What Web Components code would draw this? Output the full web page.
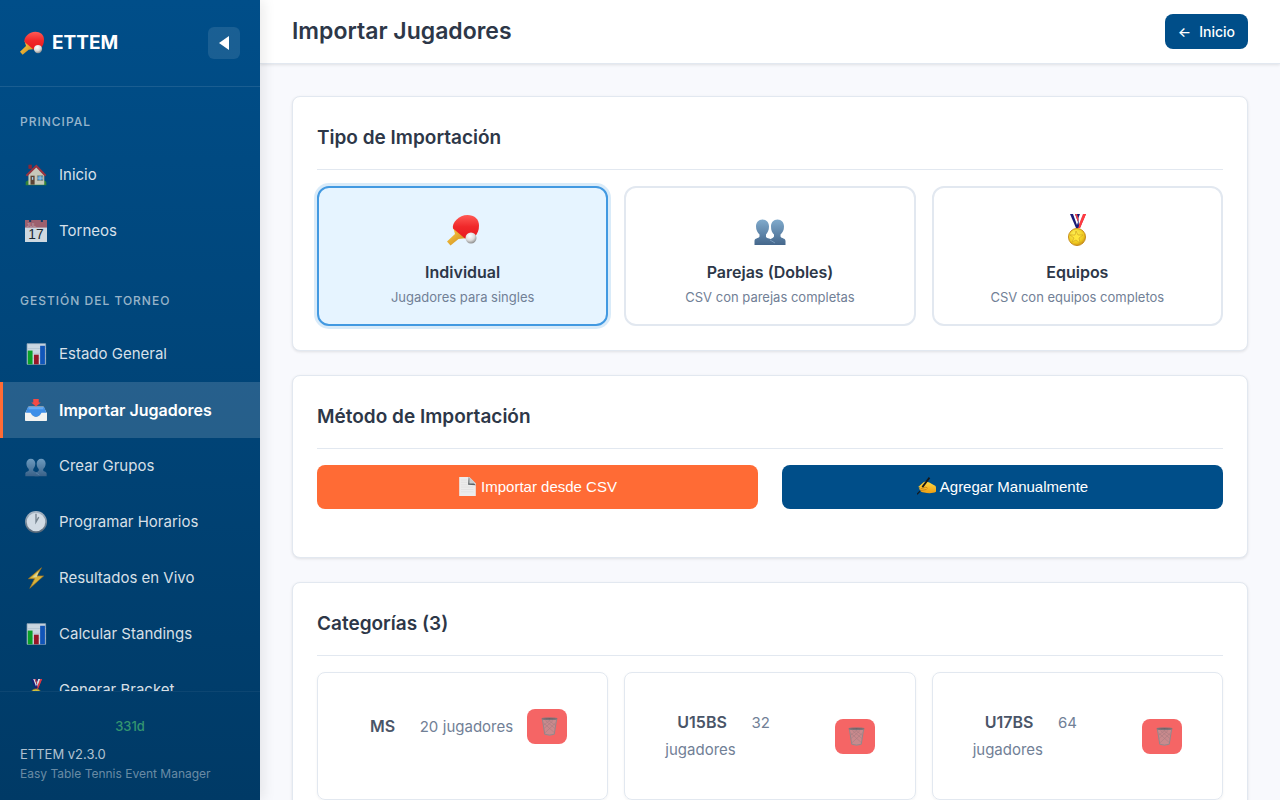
<!DOCTYPE html>
<html lang="es">
<head>
<meta charset="utf-8">
<meta name="viewport" content="width=device-width, initial-scale=1">
<title>Importar Jugadores - ETTEM</title>
<style>
	:root {
		--primary: #004e89;
		--accent: #ff6b35;
		--danger: #f56565;
		--text: #2d3748;
		--text-soft: #4a5568;
		--muted: #718096;
		--line: #e2e8f0;
	}

	body {
		margin: 0;
		background: #f8f9fd;
		color: var(--text);
		font: 16px/26px Inter, "Liberation Sans", sans-serif;
	}
</style>
</head>
<body>
<app-shell>
	<side-bar slot="sidebar">
		<nav-section label="Principal">
			<nav-item icon="house">Inicio</nav-item>
			<nav-item icon="calendar">Torneos</nav-item>
		</nav-section>
		<nav-section label="Gestión del Torneo">
			<nav-item icon="chart">Estado General</nav-item>
			<nav-item icon="inbox" active>Importar Jugadores</nav-item>
			<nav-item icon="people">Crear Grupos</nav-item>
			<nav-item icon="clock">Programar Horarios</nav-item>
			<nav-item icon="bolt">Resultados en Vivo</nav-item>
			<nav-item icon="chart">Calcular Standings</nav-item>
			<nav-item icon="medal">Generar Bracket</nav-item>
		</nav-section>
	</side-bar>
	<page-header slot="header">Importar Jugadores</page-header>
	<content-card heading="Tipo de Importación">
		<type-picker></type-picker>
	</content-card>
	<content-card heading="Método de Importación">
		<method-row>
			<method-button icon="page" variant="accent">Importar desde CSV</method-button>
			<method-button icon="writing">Agregar Manualmente</method-button>
		</method-row>
	</content-card>
	<content-card heading="Categorías (3)">
		<category-grid>
			<category-card name="MS" players="20"></category-card>
			<category-card name="U15BS" players="32"></category-card>
			<category-card name="U17BS" players="64"></category-card>
		</category-grid>
	</content-card>
</app-shell>

<script>
const ICONS = {
	paddle: `
		<defs>
			<linearGradient id="r" x1="0" y1="0" x2="0" y2="1"><stop offset="0" stop-color="#ff5a55"/><stop offset=".5" stop-color="#f0282a"/><stop offset="1" stop-color="#e8191d"/></linearGradient>
			<linearGradient id="w" x1="0" y1="0" x2="1" y2="1"><stop offset="0" stop-color="#ffd04a"/><stop offset="1" stop-color="#c98518"/></linearGradient>
			<radialGradient id="b" cx=".4" cy=".3" r=".7"><stop offset="0" stop-color="#fff"/><stop offset=".6" stop-color="#dcdcdc"/><stop offset="1" stop-color="#8f8f8f"/></radialGradient>
		</defs>
		<path fill="url(#w)" d="M6 13 8 20 0 27.500 3.500 31.500 11.500 25 20 24Z"/>
		<path fill="url(#r)" d="M6 14.500C4.500 9 12 1 20.500 1 27 1 32 5 32 11.500c0 5-1.500 8-4.500 11.500L18 24.500Z"/>
		<circle fill="url(#b)" cx="24" cy="24" r="5.500"/>`,
	house: `
		<path fill="#3b8d2b" d="M1 26q4-4 8 0h14q4-4 8 0v5H1Z"/>
		<path fill="#eadfc4" d="M5 15 16 4l12 11v15H5Z"/>
		<path fill="#a3222a" d="M5 1h5v6H5Z"/>
		<path fill="none" stroke="#b52f35" stroke-width="3" d="M2 17 16.500 3 30 17"/>
		<path fill="#6d4227" d="M8 17h6v13H8z"/>
		<path fill="#bde4ff" d="M10 19h2v4h-2z"/>
		<path fill="#4f9fd8" stroke="#9c8a68" d="M18 17h8v7h-8z"/>
		<path stroke="#d7ecf7" d="M22 17v7M18 20.500h8"/>`,
	calendar: `
		<path fill="#f2f2f2" d="M0 0h32v32H0z"/>
		<path fill="#b8656c" d="M0 0h32v11H0z"/>
		<path fill="#143b63" d="M6 0h3v3H6zM23 0h3v3h-3z"/>
		<text x="2" y="10" font-size="8" fill="#e0b0b4" font-family="Liberation Sans">JUL</text>
		<text x="16" y="28" font-size="20" text-anchor="middle" fill="#222" font-family="Liberation Sans">17</text>`,
	chart: `
		<path fill="#edf1f5" stroke="#b8c2cc" d="M3 1h27v30H3z"/>
		<path stroke="#cfd6de" d="M3 8h27M3 15h27M3 22h27"/>
		<path fill="#0db21c" d="M4 11h7v20H4z"/>
		<path fill="#b3101b" d="M13 17h7v14h-7z"/>
		<path fill="#1459c4" d="M22 4h7v27h-7z"/>`,
	inbox: `
		<path fill="#d8d8d8" d="M5 11h22l5 10H0Z"/>
		<path fill="#3f8fe8" d="M4 12h24l3 8-8 3q-7 6-14 0l-8-3Z"/>
		<path fill="#64acf5" d="M6 12h20l1 3H5Z"/>
		<path fill="#f3f3f1" d="M0 20h8q3 6 8 6t8-6h8v11q0 1-1 1H1q-1 0-1-1Z"/>
		<path fill="#f44a43" d="M12 0h8v5h3l-7 6-7-6h3Z"/>`,
	people: `
		<defs><linearGradient id="p" gradientUnits="userSpaceOnUse" x1="0" y1="5" x2="0" y2="31"><stop offset="0" stop-color="#7fa9cb"/><stop offset="1" stop-color="#426489"/></linearGradient></defs>
		<g fill="url(#p)" transform="translate(0 1)">
			<path d="M8.500 4.500c4 0 6.500 3 6.500 7 0 4-1.500 6-3 8v2.500c2 2 7 2 8 4v4H.5v-4c0-3 4-2.500 5-4.500v-2C3.500 17.500 2 15 2 11.500c0-4 2.500-7 6.500-7Z"/>
			<path d="M23.500 4.500c4 0 6.500 3 6.500 7 0 4-1.500 6-3.500 8v2c1 2 5 1.500 5 4.500v4H14v-3c0-3 5-3 6-5.500v-2c-2-2-3-4-3-8 0-4 2.500-7 6.500-7Z"/>
		</g>
		<path stroke="#7598ba" fill="none" d="m16 26 5 3"/>`,
	clock: `
		<defs><linearGradient id="c" x1="0" y1="0" x2="0" y2="1"><stop offset="0" stop-color="#c8ced6"/><stop offset="1" stop-color="#626b76"/></linearGradient></defs>
		<circle fill="url(#c)" cx="16" cy="16" r="16"/>
		<circle fill="#f6f6f8" cx="16" cy="16" r="13.500"/>
		<path fill="none" stroke="#8b9095" stroke-width="2" d="M16 4v12l4-7"/>`,
	bolt: `<path fill="#ffc933" stroke="#c07f12" d="M24 1 5 17h9L7 31l20-18H17Z"/><path fill="#fff0a0" d="m20 6-9 9h6Z"/>`,
	medal: `
		<defs><radialGradient id="g" cx=".4" cy=".35" r=".7"><stop offset="0" stop-color="#fff45c"/><stop offset=".7" stop-color="#efc91e"/><stop offset="1" stop-color="#c78c16"/></radialGradient></defs>
		<path fill="#c9152b" d="M20 0h5l-6 14h-4Z"/>
		<path fill="#ff3a40" d="M22 0h3l-6 14h-2Z"/>
		<path fill="#fff" d="M19 0h3l-5 13h-2Z"/>
		<path fill="#191b78" d="M17 0h2l-4 9-1-3Z"/>
		<path fill="#191b78" d="M9 0h8l1 12-1 2h-2Z"/>
		<path fill="#fff" d="m12 0 4 11 1-3-3-8Z"/>
		<path fill="#f04045" d="m14 0 3 8 .5-3L16 0Z"/>
		<circle fill="url(#g)" stroke="#c68c1b" cx="16" cy="23" r="8.500"/>
		<path fill="#ffe63c" stroke="#d3a824" stroke-width=".7" d="m15 17 2 4 5 0-4 3 1 5-4-3-4 2 2-4-4-3h5Z"/>`,
	page: `
		<path fill="#ececec" d="M2 0h17l11 11v21H2Z"/>
		<path fill="#5b6266" d="m18 0 12 14-13-1Z"/>
		<path fill="#c9cdce" d="m19 0 11 11H19Z"/>
		<path stroke="#dcdcdc" d="M5 5h10M5 9h10M5 13h11M5 17h21M5 21h21M5 25h21"/>`,
	writing: `
		<defs><linearGradient id="h" x1="0" y1="0" x2="0" y2="1"><stop offset="0" stop-color="#ffd944"/><stop offset="1" stop-color="#ed9e12"/></linearGradient></defs>
		<path fill="url(#h)" d="M2 17 11 9c4-3 8 0 9 0l9 5c3 1 3 3 3 5v6c-5 3-14 3-20 1-4 0-7-1-6-4-3-1-3-3-1-4Z"/>
		<path fill="none" stroke="#b76c10" d="m6 20 9-3 3 2M6 23l10-2"/>
		<path fill="none" stroke="#171717" stroke-width="3" d="M21 1 9 17"/>
		<path fill="none" stroke="#171717" stroke-width="2" d="m5 24-5 5"/>`,
	trash: `
		<path fill="#c98a8d" d="m4 4 4 25q8 4 16 0l4-25Z"/>
		<path fill="none" stroke="#a87b80" d="M6 10l19 17M9 6l17 14M15 6l12 9M26 10 8 27M22 6 6 20M16 6 6 14"/>
		<path fill="none" stroke="#8b888c" stroke-width="1.500" d="m4 4 4 25q8 3 16 0l4-25"/>
		<ellipse fill="#6d5a5d" stroke="#777b80" stroke-width="1.500" cx="16" cy="3" rx="13" ry="1.500"/>`
};

class BaseElement extends HTMLElement {
	connectedCallback() {
		if (this.shadowRoot) return;
		this.attachShadow({ mode: "open" });
		this.shadowRoot.innerHTML = this.render();
	}
}

class EmojiIcon extends BaseElement {
	render() {
		return `
			<style>
				:host {
					display: inline-block;
					width: var(--icon-size, 22px);
					height: var(--icon-size, 22px);
					flex: none;
				}

				svg { display: block; width: 100%; height: 100%; }
			</style>
			<svg viewBox="0 0 32 32" aria-hidden="true">${ICONS[this.getAttribute("name")]}</svg>
		`;
	}
}

class AppShell extends BaseElement {
	render() {
		return `
			<style>
				:host {
					display: grid;
					grid-template-columns: 260px 1fr;
					height: 100vh;
				}

				.page {
					display: flex;
					flex-direction: column;
					min-width: 0;
					min-height: 0;
				}

				main {
					display: flex;
					flex-direction: column;
					gap: 24px;
					padding: 32px;
					overflow-y: auto;
					scrollbar-width: none;
				}
			</style>
			<slot name="sidebar"></slot>
			<div class="page">
				<slot name="header"></slot>
				<main><slot></slot></main>
			</div>
		`;
	}
}

class SideBar extends BaseElement {
	render() {
		return `
			<style>
				:host {
					display: flex;
					flex-direction: column;
					min-height: 0;
					z-index: 1;
					color: #fff;
					background: linear-gradient(180deg, var(--primary), #003a66);
					box-shadow: 4px 0 12px rgba(0, 0, 0, 0.08);
				}

				header {
					display: flex;
					align-items: center;
					justify-content: space-between;
					padding: 27px 20px;
					border-bottom: 1px solid rgba(255, 255, 255, 0.1);
				}

				.logo {
					--icon-size: 24px;
					display: flex;
					align-items: center;
					gap: 8px;
					font-size: 19px;
					font-weight: 700;
				}

				button {
					display: grid;
					place-items: center;
					width: 32px;
					height: 32px;
					padding: 0;
					border: 0;
					border-radius: 6px;
					background: rgba(255, 255, 255, 0.1);
				}

				nav {
					flex: 1;
					min-height: 0;
					padding-top: 16px;
					overflow-y: auto;
					scrollbar-width: none;
				}

				footer {
					padding: 24px 20px 16px;
					border-top: 1px solid rgba(255, 255, 255, 0.05);
					font-size: 13px;
					line-height: 20px;
				}

				.days {
					margin-bottom: 8px;
					text-align: center;
					font-weight: 500;
					color: #349670;
				}

				.version { color: rgba(255, 255, 255, 0.7); }

				.tagline { font-size: 12px; color: rgba(255, 255, 255, 0.42); }
			</style>
			<header>
				<div class="logo"><emoji-icon name="paddle"></emoji-icon>ETTEM</div>
				<button type="button" aria-label="Contraer menú">
					<svg width="10" height="14" viewBox="0 0 10 14"><path fill="#fff" d="M10 0v14L0 7Z"/></svg>
				</button>
			</header>
			<nav><slot></slot></nav>
			<footer>
				<div class="days">331d</div>
				<div class="version">ETTEM v2.3.0</div>
				<div class="tagline">Easy Table Tennis Event Manager</div>
			</footer>
		`;
	}
}

class NavSection extends BaseElement {
	render() {
		return `
			<style>
				:host { display: block; margin-bottom: 23px; }

				h2 {
					margin: 0;
					padding: 10px 20px 16px;
					font-size: 12px;
					line-height: 18px;
					font-weight: 500;
					letter-spacing: 1px;
					text-transform: uppercase;
					color: rgba(255, 255, 255, 0.6);
				}
			</style>
			<h2>${this.getAttribute("label")}</h2>
			<slot></slot>
		`;
	}
}

class NavItem extends BaseElement {
	render() {
		return `
			<style>
				:host { display: block; }

				a {
					display: flex;
					align-items: center;
					gap: 10px;
					height: 56px;
					padding: 0 20px;
					border-left: 3px solid transparent;
					color: rgba(255, 255, 255, 0.85);
					font-size: 15px;
					text-decoration: none;
				}

				.icon {
					display: grid;
					place-items: center;
					width: 26px;
					opacity: 0.85;
				}

				:host([active]) a {
					border-color: var(--accent);
					background: rgba(255, 255, 255, 0.15);
					color: #fff;
					font-size: 16px;
					font-weight: 600;
				}

				:host([active]) .icon { opacity: 1; }
			</style>
			<a href="#">
				<span class="icon"><emoji-icon name="${this.getAttribute("icon")}"></emoji-icon></span>
				<span><slot></slot></span>
			</a>
		`;
	}
}

class PageHeader extends BaseElement {
	render() {
		return `
			<style>
				:host {
					display: flex;
					align-items: center;
					justify-content: space-between;
					flex: none;
					padding: 14px 32px;
					background: #fff;
					border-bottom: 1px solid var(--line);
					box-shadow: 0 1px 3px rgba(0, 0, 0, 0.1);
				}

				h1 {
					margin: 0;
					font-size: 23px;
					line-height: 35px;
					font-weight: 600;
				}

				a {
					display: flex;
					gap: 8px;
					padding: 0 13px;
					border-radius: 8px;
					background: var(--primary);
					color: #fff;
					font-size: 14px;
					line-height: 35px;
					font-weight: 500;
					text-decoration: none;
				}
			</style>
			<h1><slot></slot></h1>
			<a href="#"><span>←</span><span>Inicio</span></a>
		`;
	}
}

class ContentCard extends BaseElement {
	render() {
		return `
			<style>
				:host {
					display: block;
					flex: none;
					padding: 24px;
					background: #fff;
					border: 1px solid var(--line);
					border-radius: 8px;
					box-shadow: 0 1px 3px rgba(0, 0, 0, 0.1);
				}

				h2 {
					margin: 0 0 16px;
					padding-bottom: 14px;
					border-bottom: 1px solid var(--line);
					font-size: 19px;
					line-height: 34px;
					font-weight: 600;
				}
			</style>
			<h2>${this.getAttribute("heading")}</h2>
			<slot></slot>
		`;
	}
}

class TypePicker extends BaseElement {
	render() {
		const types = [
			["paddle", "Individual", "Jugadores para singles"],
			["people", "Parejas (Dobles)", "CSV con parejas completas"],
			["medal", "Equipos", "CSV con equipos completos"]
		];

		return `
			<style>
				:host {
					--icon-size: 32px;
					display: grid;
					grid-template-columns: repeat(3, 1fr);
					gap: 16px;
				}

				label {
					display: flex;
					flex-direction: column;
					align-items: center;
					padding: 26px 16px 14px;
					border: 2px solid var(--line);
					border-radius: 12px;
					text-align: center;
					cursor: pointer;
				}

				label:has(:checked) {
					border-color: #4299e1;
					background: #e6f4ff;
					box-shadow: 0 0 0 3px rgba(66, 153, 225, 0.2);
				}

				input {
					appearance: none;
					width: 0;
					height: 0;
					margin: 0;
				}

				strong { margin-top: 13px; font-weight: 600; }

				small { font-size: 13px; line-height: 25px; color: var(--muted); }
			</style>
			${types.map(([icon, name, hint], i) => `
				<label>
					<input type="radio" name="type" value="${name}" ${i == 0 ? "checked" : ""}>
					<emoji-icon name="${icon}"></emoji-icon>
					<strong>${name}</strong>
					<small>${hint}</small>
				</label>
			`).join("")}
		`;
	}
}

class MethodRow extends BaseElement {
	render() {
		return `
			<style>
				:host {
					display: grid;
					grid-template-columns: 1fr 1fr;
					gap: 24px;
					margin-bottom: 24px;
				}
			</style>
			<slot></slot>
		`;
	}
}

class MethodButton extends BaseElement {
	render() {
		return `
			<style>
				:host { display: block; --icon-size: 19px; }

				button {
					display: flex;
					align-items: center;
					justify-content: center;
					gap: 4px;
					width: 100%;
					height: 44px;
					padding: 0 8px 1px;
					border: 0;
					border-radius: 8px;
					background: var(--primary);
					color: #fff;
					font: 15px "Liberation Sans", Arial, sans-serif;
					cursor: pointer;
				}

				:host([variant="accent"]) button { background: var(--accent); }
			</style>
			<button type="button">
				<emoji-icon name="${this.getAttribute("icon")}"></emoji-icon>
				<span><slot></slot></span>
			</button>
		`;
	}
}

class CategoryGrid extends BaseElement {
	render() {
		return `
			<style>
				:host {
					display: grid;
					grid-template-columns: repeat(3, 1fr);
					gap: 16px;
				}
			</style>
			<slot></slot>
		`;
	}
}

class CategoryCard extends BaseElement {
	render() {
		return `
			<style>
				:host {
					display: block;
					padding: 36px 40px;
					border: 1px solid var(--line);
					border-radius: 8px;
					box-shadow: 0 1px 3px rgba(0, 0, 0, 0.05);
				}

				.row {
					display: flex;
					align-items: center;
					justify-content: space-between;
					gap: 8px;
				}

				strong {
					padding: 0 12px;
					font-weight: 600;
					color: var(--text-soft);
				}

				.count, .unit { font-size: 15px; color: var(--muted); }

				.count { padding-left: 8px; }

				button {
					--icon-size: 19px;
					display: grid;
					place-items: center;
					flex: none;
					width: 40px;
					height: 35px;
					padding: 0 0 0 4px;
					border: 0;
					border-radius: 8px;
					background: var(--danger);
					cursor: pointer;
				}
			</style>
			<div class="row">
				<div>
					<strong>${this.getAttribute("name")}</strong>
					<span class="count">${this.getAttribute("players")}</span>
					<span class="unit">jugadores</span>
				</div>
				<button type="button" aria-label="Eliminar ${this.getAttribute("name")}">
					<emoji-icon name="trash"></emoji-icon>
				</button>
			</div>
		`;
	}
}

window.customElements.define("emoji-icon", EmojiIcon);
window.customElements.define("app-shell", AppShell);
window.customElements.define("side-bar", SideBar);
window.customElements.define("nav-section", NavSection);
window.customElements.define("nav-item", NavItem);
window.customElements.define("page-header", PageHeader);
window.customElements.define("content-card", ContentCard);
window.customElements.define("type-picker", TypePicker);
window.customElements.define("method-row", MethodRow);
window.customElements.define("method-button", MethodButton);
window.customElements.define("category-grid", CategoryGrid);
window.customElements.define("category-card", CategoryCard);
</script>
</body>
</html>
